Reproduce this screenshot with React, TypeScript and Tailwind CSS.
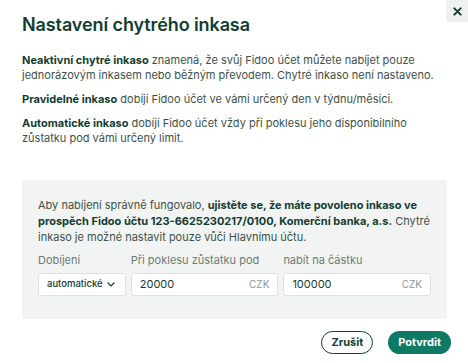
import React from "react";

export default function App() {
  return (
    <div className="w-[468px] h-[363px] bg-white relative overflow-hidden text-[#3d5148]" style={{ fontFamily: "Inter, 'Noto Sans', sans-serif" }}>
      <button className="absolute right-0 top-0 w-[22px] h-[22px] bg-[#eef1f0] flex items-center justify-center rounded-bl-sm">
        <svg width="9" height="9" viewBox="0 0 10 10"><path d="M1.5 1.5 L8.5 8.5 M8.5 1.5 L1.5 8.5" stroke="#113d31" strokeWidth="2.2" strokeLinecap="round" /></svg>
      </button>
      <div className="pl-[22px] pr-[21px] pt-[13px]">
        <h1 className="text-[18px] font-semibold text-[#113d31] leading-[24px] tracking-[-0.1px]">Nastavení chytrého inkasa</h1>
        <div className="mt-[16px] text-[11px] leading-[15px]">
          <p>
            <b className="font-bold text-[#113d31]">Neaktivní chytré inkaso</b> znamená, že svůj Fidoo účet můžete nabíjet pouze jednorázovým inkasem nebo běžným převodem. Chytré inkaso není nastaveno.
          </p>
          <p className="mt-[9px]">
            <b className="font-bold text-[#113d31]">Pravidelné inkaso</b> dobíjí Fidoo účet ve vámi určený den v týdnu/měsíci.
          </p>
          <p className="mt-[9px] pr-[20px]">
            <b className="font-bold text-[#113d31]">Automatické inkaso</b> dobíjí Fidoo účet vždy při poklesu jeho disponibilního zůstatku pod vámi určený limit.
          </p>
        </div>
        <div className="mt-[34px] bg-[#f2f4f3] rounded-[3px] px-[16px] pt-[17px] pb-[23px]">
          <p className="text-[11px] leading-[16px]">
            Aby nabíjení správně fungovalo, <b className="font-bold text-[#113d31]">ujistěte se, že máte povoleno inkaso ve prospěch Fidoo účtu 123-6625230217/0100, Komerční banka, a.s.</b> Chytré inkaso je možné nastavit pouze vůči Hlavnímu účtu.
          </p>
          <div className="mt-[7px] flex gap-[5px] text-[11px]">
            <div className="w-[88px]">
              <div className="text-[#6b7c75] leading-[16px]">Dobíjení</div>
              <div className="mt-[5px] h-[23px] bg-white border border-[#dde2e0] rounded-[3px] flex items-center justify-between pl-[8px] pr-[10px] text-[#113d31] font-medium text-[9.5px]">
                <span>automatické</span>
                <svg width="8" height="5" viewBox="0 0 8 5"><path d="M1 1 L4 4 L7 1" stroke="#113d31" strokeWidth="1.2" fill="none" strokeLinecap="round" /></svg>
              </div>
            </div>
            <div className="w-[148px]">
              <div className="text-[#6b7c75] leading-[16px]">Při poklesu zůstatku pod</div>
              <div className="mt-[5px] h-[23px] bg-white border border-[#dde2e0] rounded-[3px] flex items-center justify-between pl-[8px] pr-[8px] text-[#113d31]">
                <span>20000</span>
                <span className="text-[#8a9a93] text-[10px]">CZK</span>
              </div>
            </div>
            <div className="w-[148px]">
              <div className="text-[#6b7c75] leading-[16px]">nabít na částku</div>
              <div className="mt-[5px] h-[23px] bg-white border border-[#dde2e0] rounded-[3px] flex items-center justify-between pl-[8px] pr-[8px] text-[#113d31]">
                <span>100000</span>
                <span className="text-[#8a9a93] text-[10px]">CZK</span>
              </div>
            </div>
          </div>
        </div>
        <div className="mt-[12px] flex justify-end gap-[15px] mr-[-4px]">
          <button className="h-[23px] px-[9px] rounded-full border border-[#113d31] text-[11px] font-bold text-[#113d31]">Zrušit</button>
          <button className="h-[23px] px-[10px] rounded-full bg-[#0f7a63] text-[11px] font-bold text-white">Potvrdit</button>
        </div>
      </div>
    </div>
  );
}
